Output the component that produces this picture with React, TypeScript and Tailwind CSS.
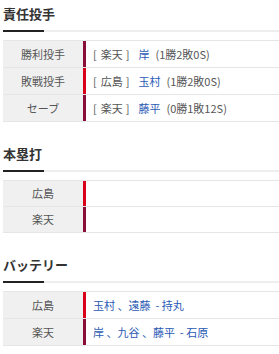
const RAKUTEN = "bg-[#8a0f38]";
const CARP = "bg-[#d9001b]";

type Row = { label: string; bar: string; content: React.ReactNode };

function Link({ children }: { children: React.ReactNode }) {
  return <span className="text-[#2b5ab5]">{children}</span>;
}

function Heading({ title, first }: { title: string; first?: boolean }) {
  return (
    <div className={first ? "pt-[4px]" : "pt-[22px]"}>
      <h2 className="text-[13px] font-bold leading-[20px] text-[#333] pb-[6px]">{title}</h2>
      <div className="flex h-[2px]">
        <div className="w-[41px] bg-[#222]" />
        <div className="flex-1 bg-[#eee]" />
      </div>
    </div>
  );
}

function Table({ rows, h }: { rows: Row[]; h: string }) {
  return (
    <div className="mt-[8px] border-t border-[#e6e6e6]">
      {rows.map((r, i) => (
        <div key={i} className={`flex ${h} border-b border-[#e6e6e6]`}>
          <div className="w-[80px] bg-[#f0f0f0] flex items-center justify-center text-[11px] text-[#555]">
            {r.label}
          </div>
          <div className={`w-[3px] ${r.bar}`} />
          <div className="flex-1 flex items-center pl-[7px] text-[11px] text-[#555] whitespace-nowrap">
            {r.content}
          </div>
        </div>
      ))}
    </div>
  );
}

function Pitcher({ team, name, stats }: { team: string; name: string; stats: string }) {
  return (
    <>
      <span>[</span>
      <span className="ml-[4px]">{team}</span>
      <span className="ml-[3px]">]</span>
      <span className="ml-[9px]">
        <Link>{name}</Link>
      </span>
      <span className="ml-[6px]">{stats}</span>
    </>
  );
}

export default function App() {
  const pitchers: Row[] = [
    { label: "勝利投手", bar: RAKUTEN, content: <Pitcher team="楽天" name="岸" stats="(1勝2敗0S)" /> },
    { label: "敗戦投手", bar: CARP, content: <Pitcher team="広島" name="玉村" stats="(1勝2敗0S)" /> },
    { label: "セーブ", bar: RAKUTEN, content: <Pitcher team="楽天" name="藤平" stats="(0勝1敗12S)" /> },
  ];

  const homers: Row[] = [
    { label: "広島", bar: CARP, content: null },
    { label: "楽天", bar: RAKUTEN, content: null },
  ];

  const battery: Row[] = [
    {
      label: "広島",
      bar: CARP,
      content: (
        <Link>
          玉村 、遠藤&nbsp; - 持丸
        </Link>
      ),
    },
    {
      label: "楽天",
      bar: RAKUTEN,
      content: (
        <Link>
          岸 、九谷 、藤平&nbsp; - 石原
        </Link>
      ),
    },
  ];

  return (
    <div
      className="w-[279px] h-[354px] overflow-hidden bg-white pl-[3px]"
      style={{ fontFamily: '"Noto Sans CJK JP", "Noto Sans", sans-serif' }}
    >
      <Heading title="責任投手" first />
      <Table rows={pitchers} h="h-[27px]" />
      <Heading title="本塁打" />
      <Table rows={homers} h="h-[26px]" />
      <Heading title="バッテリー" />
      <Table rows={battery} h="h-[27px]" />
    </div>
  );
}
